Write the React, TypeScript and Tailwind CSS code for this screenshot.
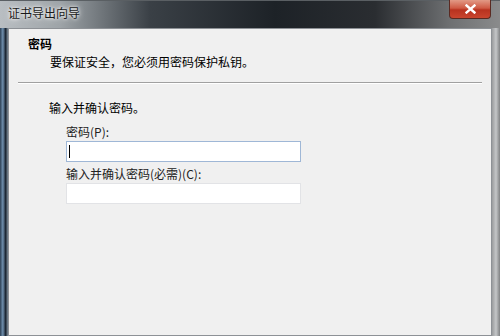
import React from 'react';

const font = { fontFamily: '"Noto Sans CJK SC", "Liberation Sans", sans-serif' };

const TitleBar: React.FC = () => (
  <div className="relative h-[28px] bg-[linear-gradient(90deg,#b9bec2_0%,#9ea4a8_12%,#3a4046_30%,#1d2227_55%,#2a2d31_75%,#6e7072_90%,#8a8b8c_100%)]">
    <div className="absolute inset-x-0 top-0 h-[1px] bg-[#5a5f63]" />
    <span className="absolute left-[8px] top-[5px] text-[12px] leading-[16px] text-[#1a1a1a] [text-shadow:0_0_6px_#ffffff,0_0_3px_#ffffff]">
      证书导出向导
    </span>
    <div className="absolute right-[9px] top-0 w-[42px] h-[19px] rounded-b-[4px] border border-t-0 border-[#5a2a22] bg-[linear-gradient(180deg,#e29a86_0%,#cf5a44_45%,#b8321f_55%,#c9452e_100%)] flex items-center justify-center">
      <svg width="11" height="10" viewBox="0 0 11 10">
        <path d="M1.5 1.5 L9.5 8.5 M9.5 1.5 L1.5 8.5" stroke="#ffffff" strokeWidth="2.4" strokeLinecap="square" />
      </svg>
    </div>
  </div>
);

const App: React.FC = () => {
  return (
    <div className="w-[500px] h-[336px] flex flex-col overflow-hidden bg-[#2a2d31]" style={font}>
      <TitleBar />
      <div className="flex flex-1 min-h-0">
        <div className="w-[8px] bg-[linear-gradient(90deg,#2c3f52_0%,#6f8fae_35%,#1a2430_70%,#7d8c99_100%)]" />
        <div className="flex-1 bg-[#f0f0f0] border border-[#8d9196] flex flex-col text-[12px] text-[#000000]">
          <div className="pt-[7px] pl-[19px]">
            <div className="font-bold leading-[16px]">密码</div>
            <div className="pl-[22px] pt-[2px] leading-[16px]">要保证安全，您必须用密码保护私钥。</div>
          </div>
          <div className="mt-[12px] mx-[9px] h-[2px] border-t border-[#a0a0a0] border-b border-b-white" />
          <div className="pt-[16px] pl-[40px] flex flex-col">
            <div className="leading-[16px]">输入并确认密码。</div>
            <div className="pl-[17px] pt-[8px] flex flex-col">
              <div className="leading-[16px] text-[#222]">密码(P):</div>
              <div className="mt-[1px] w-[235px] h-[21px] bg-white border border-[#9fb7d6] flex items-center pl-[2px]">
                <div className="w-[1px] h-[13px] bg-black" />
              </div>
              <div className="mt-[4px] leading-[16px] text-[#222]">输入并确认密码(必需)(C):</div>
              <div className="mt-[1px] w-[235px] h-[21px] bg-white border border-[#e2e3e6]" />
            </div>
          </div>
        </div>
        <div className="w-[8px] bg-[linear-gradient(90deg,#9a9c9e_0%,#c4c6c8_50%,#7f8183_100%)]" />
      </div>
    </div>
  );
};

export default App;
